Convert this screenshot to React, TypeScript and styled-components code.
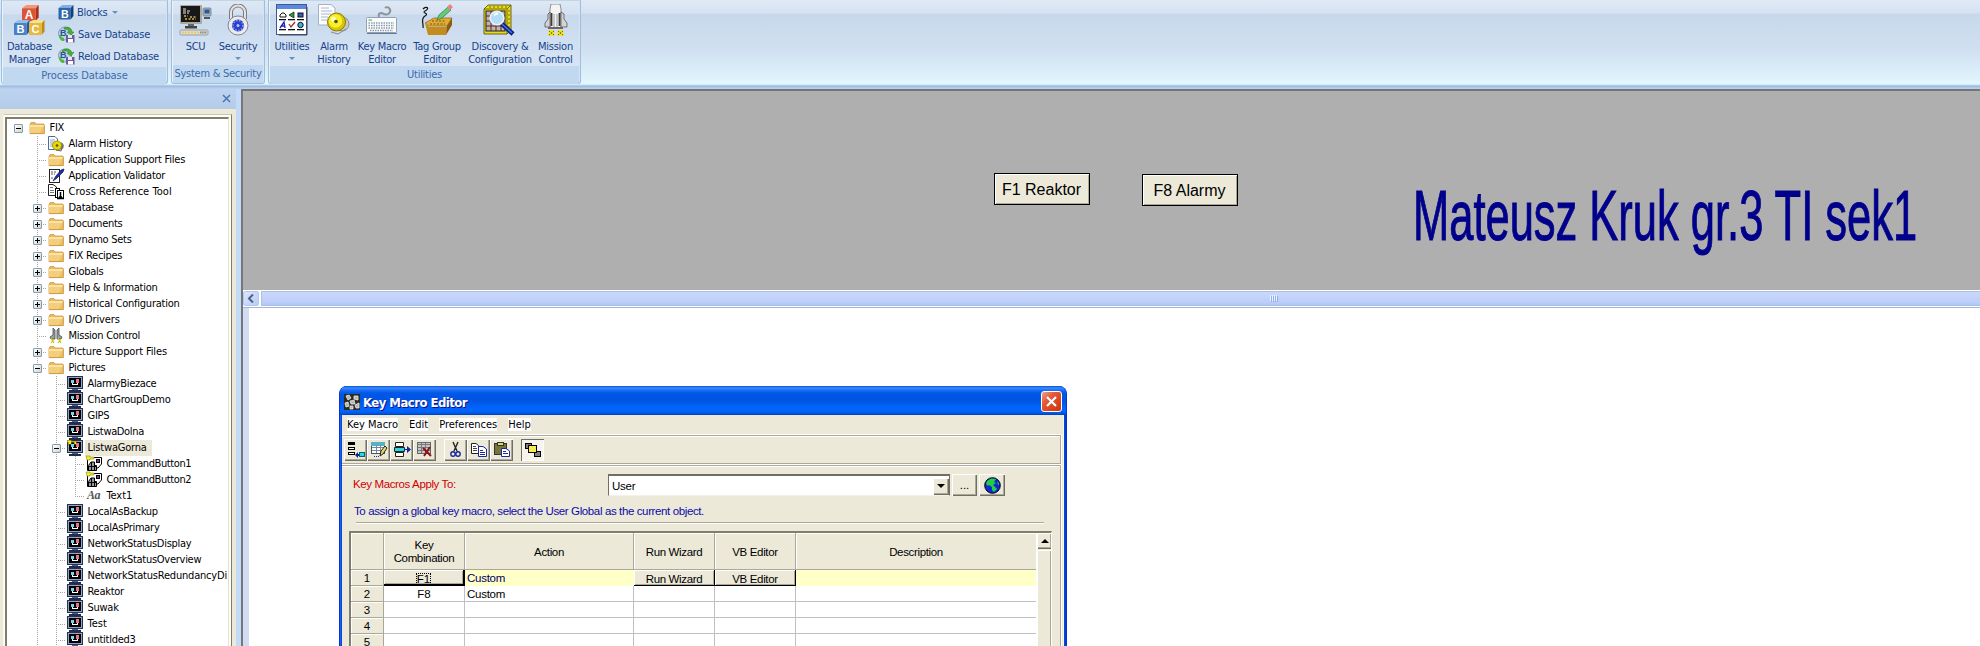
import React from "react";
import styled, { createGlobalStyle, css } from "styled-components";

const Global = createGlobalStyle`
  * { box-sizing: border-box; }
  html, body, #root { margin: 0; padding: 0; }
  body { width: 1980px; height: 646px; overflow: hidden; background: #fff;
    font-family: "DejaVu Sans Condensed", "DejaVu Sans", sans-serif; font-stretch: condensed; font-size: 11px; color: #000; }
`;

const Screen = styled.div`
  width: 1980px; height: 646px; display: flex; flex-direction: column; overflow: hidden; position: relative;
`;

const Txt = styled.span<{ $ls?: number }>`
  letter-spacing: ${p => p.$ls ?? -0.27}px; white-space: nowrap;
`;

/* ---------- ribbon ---------- */
const RibbonBar = styled.div`
  flex: none; height: 89px; display: flex; gap: 3px; padding-left: 1px;
  background: linear-gradient(#e0eaf6 0, #d6e2f1 13px, #c8d8ec 14px, #d0e0f1 50px, #e0f3fc 80px, #e4fafe 84px, #c4dcf0 85px, #9bbbe0 86px, #a2c0e4 87px, #b8d0ee 88px, #b8d0ee 89px);
`;
const Group = styled.div<{ $w: number }>`
  width: ${p => p.$w}px; height: 84px; display: flex; flex-direction: column;
  border: 1px solid #9ebfdb; border-top-color: #c3d5e8; border-radius: 0 0 3px 3px;
  box-shadow: inset 1px 0 #eaf3fb, inset -1px 0 #d5e4f4;
  background: linear-gradient(#dee8f5 0, #d5e1f1 13px, #c8d9ed 14px, #d8e5f4 67px);
`;
const Tools = styled.div`
  height: 67px; display: flex; padding: 3px 0 0 2px;
`;
const Caption = styled.div`
  flex: 1; margin: 0 1px; background: #c1d8f1; color: #3e6aaa; text-align: center; line-height: 18px; border-radius: 0 0 2px 2px;
`;
const BigButton = styled.div<{ $w: number }>`
  width: ${p => p.$w}px; flex: none; display: flex; flex-direction: column; align-items: center;
  color: #15428b; line-height: 13px; text-align: center;
  > svg:first-child { margin-bottom: 4px; flex: none; }
`;
const SmallButtons = styled.div`
  display: flex; flex-direction: column; padding-left: 3px; margin-top: -3px;
`;
const SmallButton = styled.div`
  height: 22px; flex: none; display: flex; align-items: center; gap: 3px; color: #15428b;
`;
const Arrow = styled.i<{ $below?: boolean }>`
  border: 3px solid transparent; border-top-color: #6c8fc0; border-bottom: 0; width: 0; height: 0;
  margin: ${p => (p.$below ? "4px 0 0 0" : "0 0 0 2px")};
`;

/* ---------- left panel ---------- */
const Body = styled.div` flex: 1; min-height: 0; display: flex; `;
const Side = styled.div` width: 236px; flex: none; display: flex; flex-direction: column; background: #ece9d8; `;
const SideHead = styled.div`
  height: 20px; flex: none; background: linear-gradient(#bdd3ef, #b5cce8); display: flex; justify-content: flex-end; align-items: center; padding: 0 5px 1px 0;
`;
const TreeOuter = styled.div`
  flex: 1; min-height: 0; margin: 5px 4px 0 3px; border: solid #c9c6b5; border-width: 1px 1px 0 1px; padding: 2px 2px 0 1px;
  background: #fffef8; display: flex; border-right-color: #7f7d6d; border-left-color: #fbfaf2;
`;
const Tree = styled.div`
  flex: 1; min-width: 0; overflow: hidden; background: #fff; border: solid #817e6e; border-width: 2px 0 0 2px; border-right: 1px solid #e4e1d2; padding: 1px 0 0 2px;
`;
const Row = styled.div` height: 16px; display: flex; align-items: center; `;
const dots = "repeating-linear-gradient(to bottom, #a8a59a 0 1px, transparent 1px 2px)";
const Guide = styled.span<{ $v?: boolean; $last?: boolean; $h?: boolean }>`
  width: 19px; height: 16px; flex: none; display: flex; align-items: center; justify-content: center;
  background-repeat: no-repeat;
  ${p => css`
    background-image: ${p.$v ? dots : "none"}, ${p.$h ? "repeating-linear-gradient(to right, #a8a59a 0 1px, transparent 1px 2px)" : "none"};
    background-size: 1px ${p.$last ? "8px" : "16px"}, 10px 1px;
    background-position: 9px 0, 9px 8px;
  `}
`;
const Expander = styled.i`
  width: 9px; height: 9px; border: 1px solid #7f9db9; border-radius: 1px; background: linear-gradient(135deg, #fff, #d8d3c6); display: block;
  svg { display: block; }
`;
const Name = styled.span<{ $sel?: boolean }>`
  margin-left: 2px; padding: 0 5px 0 2.5px; height: 16px; line-height: 15px; white-space: nowrap; font-size: 11px;
  background: ${p => (p.$sel ? "#ece9d8" : "transparent")};
`;
const IconBox = styled.span` width: 16px; height: 16px; margin-left: 1px; flex: none; display: flex; svg { overflow: visible; } `;
const Splitter = styled.div` width: 5px; flex: none; background: #c3daf9; `;

/* ---------- main area ---------- */
const Main = styled.div`
  flex: 1; min-width: 0; display: flex; flex-direction: column; border-left: 2px solid #77777a; background: #fff;
`;
const Canvas = styled.div`
  height: 201px; flex: none; background: #afafaf; border-top: 2px solid #757575; position: relative;
`;
const CmdButton = styled.div<{ $x: number; $y: number }>`
  position: absolute; left: ${p => p.$x - 243}px; top: ${p => p.$y - 91}px; width: 96px; height: 32px;
  border: 1px solid #000; background: #ece9d8; box-shadow: inset 1px 1px #fff, inset -1px -1px #aca899;
  font: 16px/31px "Liberation Sans", Arial, sans-serif; text-align: center; padding-right: 1px; white-space: nowrap;
`;
const Signature = styled.div`
  position: absolute; left: 1170px; top: 80px; color: #00008b; white-space: nowrap;
  font: 70px/90px "Liberation Sans", Arial, sans-serif; transform-origin: 0 0; transform: scaleX(0.621);
  -webkit-text-stroke: 1px #00008b;
`;
const HScroll = styled.div`
  height: 18px; flex: none; display: flex; background: #fff; border-bottom: 1px solid #9fb6d8; padding: 1px 0 1px 0; gap: 2px;
`;
const ScrollBtn = styled.div`
  width: 16px; border: 1px solid #b4c7ee; border-radius: 2px; background: linear-gradient(135deg, #dbe5fe, #b9cbf7); display: flex; align-items: center; justify-content: center;
`;
const Thumb = styled.div`
  flex: 1; border: 1px solid #aebfe2; border-right: 0; background: linear-gradient(#c9d8fd, #bccdf8 80%, #b0c6f4); padding-left: 1008px; display: flex; align-items: center;
`;
const Sheet = styled.div` flex: 1; border-left: 6px solid #d2ddf2; background: #fff; `;

/* ---------- dialog ---------- */
const Dialog = styled.div`
  position: absolute; left: 339px; top: 386px; width: 728px; height: 280px; border-radius: 8px 8px 0 0;
  background: #0a48d8; border: solid #0831d9; border-width: 0 1px; box-shadow: inset 1px 0 #1660ee, inset -1px 0 #0040c8; overflow: hidden;
  display: flex; flex-direction: column;
`;
const TitleBar = styled.div`
  height: 29px; flex: none; display: flex; align-items: center; padding: 2px 4px 0 4px; gap: 3px; color: #fff;
  background: linear-gradient(#0c4fd0 0, #3b8cff 2px, #1c70f8 4px, #0058e6 7px, #0054e0 14px, #0062fa 21px, #0166ff 25px, #0050d8 28px, #0038b8 29px);
`;
const Title = styled.span`
  flex: 1; padding-top: 1px; font: bold 13px "DejaVu Sans Condensed", sans-serif; font-stretch: condensed; text-shadow: 1px 1px #0f1089; letter-spacing: -0.53px;
`;
const Close = styled.div`
  width: 21px; height: 21px; border: 1px solid #fff; border-radius: 3px; background: linear-gradient(135deg, #f0a088, #e2593a 35%, #d9431d 70%, #c03a12);
  display: flex; align-items: center; justify-content: center;
`;
const Client = styled.div` flex: 1; margin: 0 2px; background: #ece9d8; display: flex; flex-direction: column; border-right: 1px solid #f8f6ec; `;
const Menu = styled.div` height: 19px; flex: none; display: flex; align-items: center; padding-left: 5px; gap: 11px; `;
const MenuItem = styled.span` background: #fff; line-height: 13px; height: 13px; white-space: nowrap; `;
const Panel = styled.div`
  margin-right: 2px; border: solid #aca899; border-width: 1px 1px 1px 0; box-shadow: inset 0 1px #fff, 0 1px #fff, 0 -1px #fff, 1px 0 #fff;
`;
const ToolPanel = styled(Panel)` height: 29px; flex: none; margin-top: 1px; display: flex; align-items: center; padding: 0 0 0 2px; `;
const FormPanel = styled(Panel)` flex: 1; margin-top: 1px; display: flex; flex-direction: column; `;
const raised = css` background: #ece9d8; box-shadow: inset 1px 1px #fff, inset -1px -1px #716f64, inset -2px -2px #aca899; `;
const ToolBtn = styled.div<{ $gap?: boolean; $down?: boolean }>`
  width: 23px; height: 22px; ${raised} display: flex; align-items: center; justify-content: center; margin-right: ${p => (p.$gap ? 8 : 0)}px;
  ${p => p.$down && css` box-shadow: inset 1px 1px #716f64, inset -1px -1px #fff; background: #f6f4ec; `}
`;
const sans = css` font: 11.5px "Liberation Sans", Arial, sans-serif; white-space: nowrap; `;
const ApplyRow = styled.div` height: 22px; margin: 8px 0 0 11px; display: flex; `;
const Label = styled.div` width: 255px; ${sans} line-height: 20px; color: #d00000; `;
const Combo = styled.div`
  width: 342px; height: 22px; display: flex; align-items: center; justify-content: space-between; padding: 1px 0 0 3px; background: #fff; ${sans}
  border: solid #716f64; border-width: 2px 1px 1px 1px; border-bottom-color: #f4f2e8; border-left-color: #716f64;
`;
const DropBtn = styled.div` width: 16px; height: 17px; ${raised} display: flex; align-items: center; justify-content: center; `;
const Tri = styled.i<{ $up?: boolean }>`
  width: 0; height: 0; border: 4px solid transparent; ${p => (p.$up ? "border-bottom-color: #000; border-top: 0;" : "border-top-color: #000; border-bottom: 0;")}
`;
const SideBtn = styled.div<{ $w: number }>`
  width: ${p => p.$w}px; height: 22px; margin-left: 2px; ${raised} display: flex; align-items: center; justify-content: center; ${sans}
`;
const Note = styled.div` ${sans} height: 18px; line-height: 18px; margin: 6px 0 0 12px; color: #0a0aa8; `;
const Rule = styled.div` height: 2px; margin: 2px 16px 0 14px; border-top: 1px solid #aca899; border-bottom: 1px solid #fff; `;
const GridFrame = styled.div`
  flex: 1; margin: 7px 8px 0 7px; border: solid #817e6e; border-width: 2px 0 0 2px; border-right: 1px solid #fff; display: flex; overflow: hidden; background: #fff;
`;
const Table = styled.div` display: grid; grid-template-columns: 33px 81px 169px 81px 81px 240px; grid-template-rows: 37px; grid-auto-rows: 16px; ${sans} flex: none; `;
const Cell = styled.div<{ $head?: boolean; $hot?: boolean; $left?: boolean; $btn?: boolean; $focus?: boolean; $edge?: boolean }>`
  display: flex; align-items: center; justify-content: ${p => (p.$left ? "flex-start" : "center")}; text-align: center; white-space: pre-line; line-height: 13px;
  padding-left: ${p => (p.$left ? 2 : 0)}px; padding-top: 1px; border: solid #c0c0c0; border-width: 0 1px 1px 0; background: #fff; overflow: hidden;
  ${p => p.$head && css` background: #ece9d8; border-color: #aca899; box-shadow: inset 1px 1px #fff; padding-top: 2px; `}
  ${p => p.$hot && css` background: #ffffc8; border-color: #ffffc8; color: #000060; `}
  ${p => p.$btn && css` background: #ece9d8; border-color: #000; box-shadow: inset 1px 1px #fff, inset -1px -1px #aca899; padding-top: 3px; `}
  ${p => p.$focus && css` border-width: 0 2px 2px 0; `}
  ${p => p.$edge && css` border-right-width: 0; `}
`;
const Focus = styled.span` outline: 1px dotted #000; outline-offset: -1px; line-height: 12px; padding: 0 1px; `;
const VScroll = styled.div` width: 16px; flex: none; background: #ece9d8; border-left: 1px solid #fff; display: flex; flex-direction: column; gap: 1px; `;
const VBtn = styled.div` height: 16px; ${raised} display: flex; align-items: center; justify-content: center; `;
const VThumb = styled.div` flex: 1; ${raised} `;

/* ---------- drawings ---------- */
const Folder = () => (
  <svg width="16" height="16" viewBox="0 0 16 16">
    <path d="M1 4.5L2 2.5H6L7 4H15V13.5H1Z" fill="#e8b95c" stroke="#d09b48" strokeWidth=".8" />
    <rect x="1" y="5" width="14" height="8.3" fill="#f3cf7c" />
    <path d="M1 5H15V7H1Z" fill="#fbe3a2" /><path d="M10 13.4H15V6Z" fill="#ecbf60" />
    <path d="M1 13.6H15.4V5" fill="none" stroke="#c69443" strokeWidth=".8" />
  </svg>
);
const Monitor = ({ k }: { k?: boolean }) => (
  <svg width="16" height="16" viewBox="0 0 16 16" shapeRendering="crispEdges">
    <rect x="0" y="0" width="16" height="13" fill="#26334f" /><rect x="1" y="1" width="14" height="11" fill="#8fa4c8" />
    <rect x="2" y="2" width="12" height="9" fill="#000" />
    <rect x="4" y="4" width="3" height="3" fill="#6fd8ee" /><rect x="9" y="3" width="3" height="4" fill="#f07080" />
    <path d="M5 7H6V8H10V7H11V9H5Z" fill="#fff" />
    <rect x="5" y="13" width="6" height="1" fill="#4a5f8a" /><rect x="2" y="14" width="12" height="2" fill="#202c48" />
    {k && <path d="M0 0H4V1H9V4H7V2H4V4H1V2H0Z" fill="#f3ea2a" stroke="#7c7800" strokeWidth=".5" />}
  </svg>
);
const BellDoc = () => (
  <svg width="16" height="16" viewBox="0 0 16 16">
    <path d="M.5 .5H7L9.500 3V13.500H.5Z" fill="#fff" stroke="#4a6a9a" /><path d="M2 4H7M2 6H8M2 8H6M2 10H6" stroke="#8aa4c8" />
    <circle cx="12" cy="10" r="3.800" fill="#888" /><circle cx="9" cy="9.500" r="4.500" fill="#e8d800" stroke="#8a8000" strokeWidth=".7" /><circle cx="9" cy="9.500" r="1.300" fill="#5a5400" />
    <path d="M8 14L13 15L15 9" stroke="#666" fill="none" />
  </svg>
);
const Validator = () => (
  <svg width="16" height="16" viewBox="0 0 16 16">
    <rect x="1.500" y="1.500" width="10" height="13" fill="#fff" stroke="#222" /><path d="M3 4H8M3 6H7M3 10H6" stroke="#555" strokeDasharray="2 1" />
    <path d="M5 13L8 8L13 2L16 1L15 4L9 10Z" fill="#1b2fb8" stroke="#06104a" strokeWidth=".7" />
  </svg>
);
const CrossRef = () => (
  <svg width="16" height="16" viewBox="0 0 16 16">
    <path d="M.5 .5H5L8.500 3V11.500H.5Z" fill="#fff" stroke="#222" /><path d="M2 3.500H5M2 6.500H6M2 8.500H6" stroke="#777" />
    <rect x="7.500" y="4.500" width="4" height="9" fill="#fff" stroke="#000" /><rect x="9.500" y="6.500" width="6" height="8" fill="#fff" stroke="#000" /><path d="M12.500 8V12M10.500 14.500L12.500 12L14.500 14.500Z" stroke="#000" strokeWidth="1.500" />
  </svg>
);
const RocketSm = () => (
  <svg width="16" height="16" viewBox="0 0 16 16">
    <path d="M5 0L7 2V11H3L2 9L5 7ZM11 0L9 2V11H13L14 9L11 7Z" fill="#9aa0a6" stroke="#44484c" strokeWidth=".8" />
    <path d="M3 10L6 15M6 11L3 15M10 10L13 15M13 11L10 15" stroke="#cdc400" strokeWidth="1.200" />
  </svg>
);
const CmdIcon = () => (
  <svg width="16" height="16" viewBox="0 0 16 16">
    <path d="M1.500 1.500H15.500V8L12 12H9V14.500H1.500Z" fill="#fff" stroke="#000" /><rect x="10.500" y="3.500" width="3" height="3" fill="#a020a0" stroke="#000" />
    <path d="M2.500 9.500L5 6H8.500V9.500H10.500V14.500H2.500Z" fill="#999" stroke="#000" /><path d="M5.500 6V14M2.500 10.500H10M8.500 9V14" stroke="#000" />
    <path d="M0 0H4V1H8V3H4V4H1Z" fill="#f3ea2a" stroke="#7c7800" strokeWidth=".5" />
  </svg>
);
const AaBox = styled.i` font: italic bold 12px/15px "Liberation Serif", serif; color: #555; letter-spacing: -0.5px; margin-left: 1px; `;

const Cube = ({ x, y, s, c, d, t, ch }: { x: number; y: number; s: number; c: string; d: string; t: string; ch: string }) => (
  <g>
    <path d={`M${x} ${y + s * 0.22}L${x + s * 0.3} ${y}H${x + s * 1.15}L${x + s * 0.95} ${y + s * 0.22}Z`} fill={t} />
    <path d={`M${x + s * 0.95} ${y + s * 0.22}L${x + s * 1.15} ${y}V${y + s * 0.85}L${x + s * 0.95} ${y + s * 1.1}Z`} fill={d} />
    <rect x={x} y={y + s * 0.22} width={s * 0.95} height={s * 0.9} rx=".8" fill={c} />
    <text x={x + s * 0.48} y={y + s * 0.98} fontSize={s * 0.82} fontWeight="bold" fill="#fff" textAnchor="middle" fontFamily="Liberation Sans">{ch}</text>
  </g>
);
const Blocks3 = () => (
  <svg width="34" height="32" viewBox="0 0 34 32">
    <Cube x={9} y={1} s={14.500} c="#dd5334" d="#a83218" t="#f49678" ch="A" />
    <Cube x={1} y={16} s={13.500} c="#4a80c4" d="#2a5a9c" t="#94bde8" ch="B" />
    <Cube x={16} y={16} s={13.500} c="#e6b83c" d="#b98a1c" t="#f8e08c" ch="C" />
  </svg>
);
const BlockSm = () => <svg width="16" height="16" viewBox="0 0 16 16"><Cube x={0.500} y={1} s={13} c="#2f64a8" d="#143e78" t="#7fb0e4" ch="B" /></svg>;
const DbSm = ({ up }: { up?: boolean }) => (
  <svg width="17" height="17" viewBox="0 0 17 17">
    <circle cx="7" cy="7.500" r="6.500" fill="#bcd2ec" stroke="#7a9cc8" />
    <text x="2" y="10" fontSize="9" fontWeight="bold" fill="#2a5490" fontFamily="Liberation Sans">B</text>
    <path d={up ? "M4 3C8 -1 13 1 14 5L16 4L13 8L9 5L11 5C10 3 7 2 5 4Z" : "M6 2C10 0 14 2 14 6L16 6L13 9L9 6H11C11 4 9 3 6 3Z"} fill="#48b030" stroke="#247814" strokeWidth=".5" />
    <path d="M1 9C1 13 3 15 6 15L6 12C4 12 3 11 3 9Z" fill="#50b838" />
    <rect x="8" y="9" width="8.500" height="7.500" fill="#6b5a9c" /><rect x="10" y="9" width="4" height="3" fill="#e8e4f4" /><rect x="10" y="13" width="5" height="3.500" fill="#fff" />
  </svg>
);
const Scu = () => (
  <svg width="34" height="32" viewBox="0 0 34 32">
    <rect x="1" y="1" width="22" height="19" rx="1" fill="#a8a8a0" /><rect x="2" y="2" width="19" height="16" fill="#181818" />
    <path d="M4 5H8M4 7H12M4 9H10" stroke="#e8e8e8" strokeDasharray="3 1" /><path d="M5 12H9M11 13H18M6 15H17" stroke="#d8b050" strokeWidth="1.500" strokeDasharray="2 1.500" />
    <rect x="9" y="20" width="6" height="2" fill="#666" /><rect x="6" y="22" width="12" height="2.500" fill="#444" />
    <rect x="24" y="4" width="8" height="8" rx="1" fill="#a8b4bc" stroke="#68747c" strokeWidth=".7" /><rect x="25.500" y="5.500" width="5" height="4" fill="#2b58a0" /><rect x="25" y="13" width="6" height="2" fill="#555" />
    <rect x="1" y="26" width="28" height="5" rx="1" fill="#dcdcd4" stroke="#888" strokeWidth=".7" /><path d="M3 28.500H20" stroke="#e8cc60" strokeWidth="2" strokeDasharray="2 1" /><path d="M21 28.500H28" stroke="#888" strokeWidth="2" strokeDasharray="1.500 .7" />
  </svg>
);
const Lock = () => (
  <svg width="24" height="32" viewBox="0 0 24 32">
    <path d="M5 15V8A7 6.500 0 0 1 19 8V15" fill="none" stroke="#7b7b7b" strokeWidth="4" /><path d="M5 15V8A7 6.500 0 0 1 19 8V15" fill="none" stroke="#e4e4e4" strokeWidth="2" />
    <ellipse cx="12" cy="21.500" rx="10" ry="9.500" fill="#e9ebf0" stroke="#83858c" />
    <circle cx="12" cy="21.500" r="6" fill="#2a41c8" /><circle cx="12" cy="21.500" r="5" fill="none" stroke="#8aa0f0" strokeWidth="1.500" strokeDasharray="1.500 1.500" /><circle cx="12" cy="21.500" r="1.500" fill="#b4c4ff" />
  </svg>
);
const UtilIcon = () => (
  <svg width="32" height="32" viewBox="0 0 32 32">
    <rect x=".5" y=".5" width="30" height="30" fill="#fff" stroke="#3c5a94" /><rect x="1" y="1" width="29" height="4" fill="#5c88e0" /><path d="M31 3V31H3" stroke="#445" fill="none" />
    <g fill="#111">{[3, 12, 21].map(x => [15, 25].map(y => <rect key={x + "-" + y} x={x} y={y} width="7" height="1.300" />))}</g>
    <path d="M4 13V11L6 9H8L10 11V13Z" fill="none" stroke="#111" /><path d="M13 11L18 8V14Z" fill="#2a9a3a" stroke="#111" strokeWidth=".7" /><rect x="22" y="9" width="5" height="4" fill="#3858c8" stroke="#111" />
    <path d="M4 24L8 18L9 24M5 22H9" stroke="#1a24c0" strokeWidth="1.400" fill="none" /><path d="M13 20L15 23L19 18" stroke="#a03020" fill="none" strokeWidth="1.300" /><circle cx="24.500" cy="21" r="2.700" fill="#38b0e0" stroke="#112" />
  </svg>
);
const BellBig = () => (
  <svg width="34" height="32" viewBox="0 0 34 32">
    <path d="M1.500 .5H14L18 4V21H1.500Z" fill="#fdfdfd" stroke="#a4b2c4" /><path d="M4 4H12M4 7H15M4 10H14M4 13H11M4 16H10" stroke="#a8b8d0" />
    <circle cx="25" cy="20" r="7" fill="#c4c8cc" stroke="#909090" /><circle cx="19.500" cy="18" r="9" fill="#d8c400" stroke="#8a7c00" /><circle cx="18.500" cy="17" r="6.800" fill="#f8ee30" />
    <circle cx="16.500" cy="15" r="2.600" fill="#fffca8" /><circle cx="19" cy="17.500" r="1.800" fill="#554e00" /><path d="M14 28L21 30L29 25" stroke="#888" fill="none" />
  </svg>
);
const KeyboardIcon = () => (
  <svg width="34" height="32" viewBox="0 0 34 32">
    <path d="M14 14C13 9 15 8 19 10C24 12 27 7 24 4C23 3 21 3 20 4" stroke="#8c949c" strokeWidth="2" fill="none" />
    <rect x="1.500" y="13.500" width="30" height="15" rx="1" fill="#fafbfc" stroke="#92a0b0" /><path d="M2 29.500H32" stroke="#6a7c90" />
    <path d="M3.500 16H7" stroke="#30a840" /><path d="M3.500 19H29M3.500 21.500H29M3.500 24H29M5 26.500H28" stroke="#8a9cb0" strokeWidth="1.500" strokeDasharray="1.500 1" />
  </svg>
);
const TagIcon = () => (
  <svg width="34" height="32" viewBox="0 0 34 32">
    <path d="M3 5C7 1 10 5 5 7C1 9 10 9 5 12C0 15 4 20 3 24" stroke="#111" fill="none" strokeWidth="1.200" />
    <path d="M5 19L14 14H32L27 22H9Z" fill="#e0ac34" stroke="#8a600c" strokeWidth=".7" /><path d="M5 19L9 23H27L26 31H8Z" fill="#c48c1c" /><path d="M27 22L32 14V21L26 31Z" fill="#8c5c0c" />
    <path d="M12 17H26M10 20H25" stroke="#7c540c" strokeDasharray="2 1.500" /><path d="M17 16L19 11L28 3L31 6L22 14Z" fill="#66c878" stroke="#2c7840" strokeWidth=".7" /><path d="M27 3L30 0L33 3L30 6Z" fill="#ee8088" />
  </svg>
);
const DiscIcon = () => (
  <svg width="34" height="32" viewBox="0 0 34 32">
    <path d="M1 5L5 1H28V26L24 30H1Z" fill="#e8d820" stroke="#4c4600" strokeWidth=".8" /><path d="M24 30V5H1M24 5L28 1" stroke="#4c4600" fill="none" strokeWidth=".7" />
    <path d="M6 3H26M26 6V26" stroke="#807400" strokeDasharray="2 2" /><rect x="3" y="7" width="19" height="20" fill="#bcb4b0" stroke="#222" /><path d="M3 12H22M3 17H22M3 22H22M8 7V27M13 7V27M18 7V27" stroke="#5c2420" />
    <circle cx="14" cy="14" r="6.800" fill="#b4dcf6" stroke="#e4f2fc" strokeWidth="1.600" /><path d="M11 11L15 9" stroke="#fff" strokeWidth="2" /><path d="M19 20L30 30" stroke="#0a1c80" strokeWidth="4.500" /><path d="M19 20L29 29" stroke="#3c74e8" strokeWidth="1.600" />
  </svg>
);
const RocketBig = () => (
  <svg width="26" height="32" viewBox="0 0 26 32">
    <path d="M8 0H17L18 5V24H7V5Z" fill="#f4f4f4" stroke="#777" strokeWidth=".8" /><path d="M7 8V23H2V19L5 15V10ZM18 8V23H24V19L21 15V10Z" fill="#d4d4d6" stroke="#555" strokeWidth=".8" />
    <path d="M8.500 9V22M16.500 9V22" stroke="#3c3c3c" strokeWidth="1.800" /><path d="M11 10V24M14 10V24" stroke="#999" /><rect x="5" y="23" width="15" height="2" fill="#666" />
    <path d="M6 26H11L12 32H5ZM15 26H20L21 32H14Z" fill="#eee22c" /><path d="M6 27L11 31M11 27L6 31M15 27L20 31M20 27L15 31" stroke="#6c6400" strokeDasharray="1.500 1" />
  </svg>
);

const toolIcons = [
  <g><path d="M1 1H8V4H1ZM1 6H8V9H1ZM1 11H8V14H1Z" fill="#000" /><path d="M2 7H7V8H2ZM2 12H7V13H2Z" fill="#fff" /><rect x="12.500" y="11.500" width="5" height="4" fill="#28d8e0" stroke="#066" /><path d="M8 14L11 11V13H12V15H11V17Z" fill="#1020a0" /></g>,
  <g><rect x="1.500" y="1.500" width="13" height="11" fill="#fff" stroke="#457" /><rect x="1" y="1" width="14" height="4" fill="#5ab0c8" /><path d="M2 6.500H14M2 9.500H14M6.500 4V12M10.500 4V12" stroke="#789" /><path d="M10 15L11 10L15 5L17 7L13 13Z" fill="#e8d860" stroke="#222" /><path d="M4 15.500H9" stroke="#1828b0" strokeDasharray="1 1" /></g>,
  <g><path d="M2.500 1.500H10.500V5.500H2.500ZM2.500 11.500H10.500V15.500H2.500Z" fill="#fff" stroke="#222" /><path d="M1.500 6.500H11.500V10.500H1.500Z" fill="#28d8e0" stroke="#222" /><path d="M11 8H14V5L18 8.500L14 12V9H11Z" fill="#1020a0" /></g>,
  <g><rect x="1.500" y="1.500" width="13" height="11" fill="#c8c8c8" stroke="#666" /><path d="M1 3.500H14M2 6.500H14M2 9.500H14M5.500 2V12M9.500 2V12" stroke="#777" /><path d="M7 7L15 15M14 6L8 15" stroke="#8c1414" strokeWidth="2" /></g>,
  <g><path d="M6 1L10 10M11 1L7 10" stroke="#222" strokeWidth="1.400" /><circle cx="6" cy="13" r="2.200" fill="none" stroke="#1828a0" strokeWidth="1.400" /><circle cx="11" cy="13" r="2.200" fill="none" stroke="#1828a0" strokeWidth="1.400" /></g>,
  <g><path d="M1.500 2.500H6L8.500 4.500V12.500H1.500Z" fill="#fff" stroke="#222" /><path d="M3 5.500H6M3 7.500H7M3 9.500H7" stroke="#444" /><path d="M8.500 5.500H13L16.500 8V15.500H8.500Z" fill="#fff" stroke="#1828a0" /><path d="M10 9.500H13M10 11.500H15M10 13.500H15" stroke="#1828a0" /></g>,
  <g><rect x="1.500" y="2.500" width="12" height="11" fill="#75753a" stroke="#333" /><rect x="4.500" y="1.500" width="6" height="3" fill="#e0d860" stroke="#333" /><path d="M8.500 7.500H13L16.500 10V15.500H8.500Z" fill="#fff" stroke="#1828a0" /><path d="M10 10.500H13M10 12.500H15" stroke="#1828a0" /></g>,
  <g><rect x="1.500" y="2.500" width="6" height="5" fill="#808080" stroke="#000" /><rect x="10.500" y="10.500" width="6" height="5" fill="#808080" stroke="#000" /><rect x="4.500" y="4.500" width="8" height="7" fill="#f4ec50" stroke="#000" /></g>,
];

type Node = [number, string, string, string?, number?];
const tree: Node[] = [
  [0, "folder", "FIX", "-"], [1, "bell", "Alarm History"], [1, "folder", "Application Support Files", "", -0.23], [1, "valid", "Application Validator"],
  [1, "cross", "Cross Reference Tool", "", 0.05], [1, "folder", "Database", "+"], [1, "folder", "Documents", "+"], [1, "folder", "Dynamo Sets", "+"],
  [1, "folder", "FIX Recipes", "+"], [1, "folder", "Globals", "+"], [1, "folder", "Help & Information", "+"], [1, "folder", "Historical Configuration", "+", -0.23],
  [1, "folder", "I/O Drivers", "+", -0.15], [1, "rocket", "Mission Control"], [1, "folder", "Picture Support Files", "+", -0.12], [1, "folder", "Pictures", "-"],
  [2, "mon", "AlarmyBiezace", "", -0.35], [2, "mon", "ChartGroupDemo"], [2, "mon", "GIPS"], [2, "mon", "ListwaDolna", "", -0.35], [2, "monkey", "ListwaGorna", "-", -0.2],
  [3, "cmd", "CommandButton1", "", -0.4], [3, "cmd", "CommandButton2", "", -0.4], [3, "aa", "Text1", "", -0.1],
  [2, "mon", "LocalAsBackup"], [2, "mon", "LocalAsPrimary"], [2, "mon", "NetworkStatusDisplay"], [2, "mon", "NetworkStatusOverview"],
  [2, "mon", "NetworkStatusRedundancyDi", "", -0.2], [2, "mon", "Reaktor"], [2, "mon", "Suwak"], [2, "mon", "Test", "", 0], [2, "mon", "untitlded3"],
];
const icons: Record<string, React.ReactNode> = {
  folder: <Folder />, bell: <BellDoc />, valid: <Validator />, cross: <CrossRef />, rocket: <RocketSm />,
  mon: <Monitor />, monkey: <Monitor k />, cmd: <CmdIcon />, aa: <AaBox>Aa</AaBox>,
};

const TreeRow = ({ n }: { n: Node }) => {
  const [level, icon, text, exp, ls] = n;
  return (
    <Row>
      {Array.from({ length: level }, (_, i) => <Guide key={i} $v={i > 0} />)}
      <Guide $v={level > 0} $h={level > 0} $last={text === "Text1"}>
        {exp && (
          <Expander>
            <svg width="7" height="7" viewBox="0 0 7 7" shapeRendering="crispEdges"><path d={exp === "+" ? "M1 3H6V4H1ZM3 1H4V6H3Z" : "M1 3H6V4H1Z"} /></svg>
          </Expander>
        )}
      </Guide>
      <IconBox>{icons[icon]}</IconBox>
      <Name $sel={icon === "monkey"}><Txt $ls={ls}>{text}</Txt></Name>
    </Row>
  );
};

const Big = ({ w, icon, a, b, drop }: { w: number; icon: React.ReactNode; a: string; b?: string; drop?: boolean }) => (
  <BigButton $w={w}>{icon}<Txt>{a}</Txt>{b && <Txt>{b}</Txt>}{drop && <Arrow $below />}</BigButton>
);

export default function App() {
  return (
    <Screen>
      <Global />
      <RibbonBar>
        <Group $w={167}>
          <Tools>
            <Big w={51} icon={<Blocks3 />} a="Database" b="Manager" />
            <SmallButtons>
              <SmallButton><BlockSm /><Txt>Blocks</Txt><Arrow /></SmallButton>
              <SmallButton><DbSm /><Txt $ls={-0.2}>Save Database</Txt></SmallButton>
              <SmallButton><DbSm up /><Txt $ls={-0.2}>Reload Database</Txt></SmallButton>
            </SmallButtons>
          </Tools>
          <Caption><Txt $ls={-0.1}>Process Database</Txt></Caption>
        </Group>
        <Group $w={94}>
          <Tools>
            <Big w={43} icon={<Scu />} a="SCU" />
            <Big w={42} icon={<Lock />} a="Security" drop />
          </Tools>
          <Caption><Txt>System &amp; Security</Txt></Caption>
        </Group>
        <Group $w={313}>
          <Tools>
            <Big w={42} icon={<UtilIcon />} a="Utilities" drop />
            <Big w={42} icon={<BellBig />} a="Alarm" b="History" />
            <Big w={54} icon={<KeyboardIcon />} a="Key Macro" b="Editor" />
            <Big w={56} icon={<TagIcon />} a="Tag Group" b="Editor" />
            <Big w={70} icon={<DiscIcon />} a="Discovery &" b="Configuration" />
            <Big w={41} icon={<RocketBig />} a="Mission" b="Control" />
          </Tools>
          <Caption><Txt>Utilities</Txt></Caption>
        </Group>
      </RibbonBar>
      <Body>
        <Side>
          <SideHead><svg width="9" height="9" viewBox="0 0 9 9"><path d="M1 1L8 8M8 1L1 8" stroke="#4a74b4" strokeWidth="1.500" /></svg></SideHead>
          <TreeOuter><Tree>{tree.map(n => <TreeRow key={n[2]} n={n} />)}</Tree></TreeOuter>
        </Side>
        <Splitter />
        <Main>
          <Canvas>
            <CmdButton $x={994} $y={173}>F1 Reaktor</CmdButton>
            <CmdButton $x={1142} $y={174}>F8 Alarmy</CmdButton>
            <Signature>Mateusz Kruk gr.3 TI sek1</Signature>
          </Canvas>
          <HScroll>
            <ScrollBtn><svg width="8" height="9" viewBox="0 0 8 9"><path d="M6 .5L2 4.500L6 8.500" stroke="#4d6185" strokeWidth="2" fill="none" /></svg></ScrollBtn>
            <Thumb><svg width="9" height="7" viewBox="0 0 9 7" shapeRendering="crispEdges"><path d="M.5 0V6M2.500 0V6M4.500 0V6M6.500 0V6" stroke="#eef4fe" /><path d="M1.500 1V7M3.500 1V7M5.500 1V7M7.500 1V7" stroke="#8cb0f8" /></svg></Thumb>
          </HScroll>
          <Sheet />
        </Main>
      </Body>

      <Dialog>
        <TitleBar>
          <svg width="16" height="16" viewBox="0 0 16 16"><rect width="16" height="16" fill="#2a2a26" /><g fill="#b8b8b0" stroke="#eee" strokeWidth=".8"><path d="M2 2L5 1L7 4L4 6Z" /><path d="M10 2L14 2L14 6L10 5Z" /><path d="M6 7L10 6L11 10L7 10Z" /><path d="M1 9L4 8L5 12L2 13Z" /><path d="M11 11L15 9L15 14L12 14Z" /><path d="M6 12L9 12L9 15L6 15Z" /></g></svg>
          <Title>Key Macro Editor</Title>
          <Close><svg width="13" height="13" viewBox="0 0 13 13"><path d="M2 2L11 11M11 2L2 11" stroke="#fff" strokeWidth="2.200" /></svg></Close>
        </TitleBar>
        <Client>
          <Menu>{["Key Macro", "Edit", "Preferences", "Help"].map(m => <MenuItem key={m}><Txt $ls={0}>{m}</Txt></MenuItem>)}</Menu>
          <ToolPanel>
            {toolIcons.map((g, i) => (
              <ToolBtn key={i} $gap={i === 3 || i === 6} $down={i === 7}><svg width="18" height="18" viewBox="0 0 18 18">{g}</svg></ToolBtn>
            ))}
          </ToolPanel>
          <FormPanel>
            <ApplyRow>
              <Label><Txt $ls={-0.38}>Key Macros Apply To:</Txt></Label>
              <Combo><Txt>User</Txt><DropBtn><Tri /></DropBtn></Combo>
              <SideBtn $w={25}>...</SideBtn>
              <SideBtn $w={26}>
                <svg width="17" height="17" viewBox="0 0 17 17"><circle cx="8.500" cy="8.500" r="7.800" fill="#1228d0" stroke="#001" /><path d="M3 4L7 1.500L12 2L10 5L12 6L9 8L11 10L13 12L10 15L8 13L8 10L5 8L4 9L2 7Z" fill="#20d040" /><path d="M13 4L15.500 7L14 8Z" fill="#20d040" /></svg>
              </SideBtn>
            </ApplyRow>
            <Note><Txt $ls={-0.38}>To assign a global key macro, select the User Global as the current object.</Txt></Note>
            <Rule />
            <GridFrame>
              <Table>
                {["", "Key\nCombination", "Action", "Run Wizard", "VB Editor", "Description"].map((h, i) => <Cell key={i} $head $edge={i === 5}><Txt style={{ whiteSpace: "pre" }} $ls={-0.35}>{h}</Txt></Cell>)}
                <Cell $head>1</Cell><Cell $btn $focus><Focus>F1</Focus></Cell><Cell $hot $left><Txt>Custom</Txt></Cell>
                <Cell $btn><Txt $ls={-0.35}>Run Wizard</Txt></Cell><Cell $btn><Txt $ls={-0.35}>VB Editor</Txt></Cell><Cell $hot $edge />
                <Cell $head>2</Cell><Cell>F8</Cell><Cell $left><Txt>Custom</Txt></Cell><Cell /><Cell /><Cell $edge />
                {[3, 4, 5].map(r => (
                  <React.Fragment key={r}><Cell $head>{r}</Cell><Cell /><Cell /><Cell /><Cell /><Cell $edge /></React.Fragment>
                ))}
              </Table>
              <VScroll><VBtn><Tri $up /></VBtn><VThumb /></VScroll>
            </GridFrame>
          </FormPanel>
        </Client>
      </Dialog>
    </Screen>
  );
}
